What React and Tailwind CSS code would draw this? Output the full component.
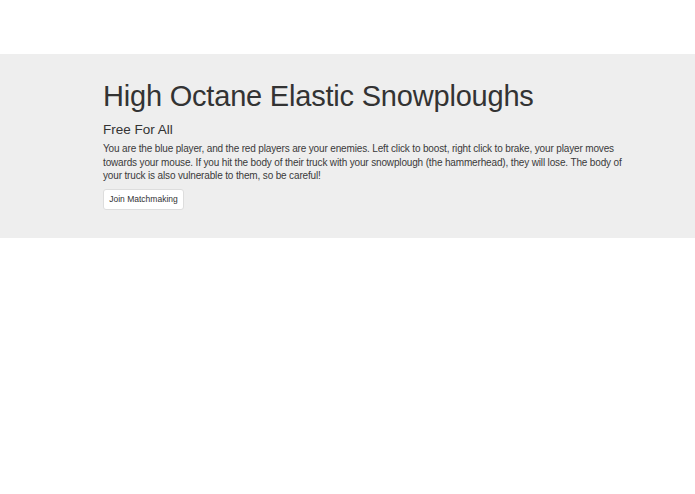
import React from "react";

export default function App() {
  return (
    <div className="min-h-screen bg-white text-[#333]" style={{ fontFamily: '"Liberation Sans", Arial, sans-serif' }}>
      <div className="h-[54px]" />
      <div className="bg-[#eeeeee] h-[184px]">
        <div className="ml-[103px] w-[522px] pt-[25px]">
          <h1 className="text-[29px] leading-[34px] font-normal tracking-[-0.2px]">High Octane Elastic Snowploughs</h1>
          <h4 className="mt-[9px] text-[13.5px] leading-[16px]">Free For All</h4>
          <p className="mt-[4px] text-[10px] leading-[13.5px] tracking-[-0.15px] text-[#3a3a3a]">
            You are the blue player, and the red players are your enemies. Left click to boost, right click to brake, your player moves
            towards your mouse. If you hit the body of their truck with your snowplough (the hammerhead), they will lose. The body of
            your truck is also vulnerable to them, so be careful!
          </p>
          <button className="mt-[6.5px] h-[21px] w-[81px] bg-white border border-[#ddd] rounded-[3px] text-[8.5px] text-[#333]">
            Join Matchmaking
          </button>
        </div>
      </div>
    </div>
  );
}
